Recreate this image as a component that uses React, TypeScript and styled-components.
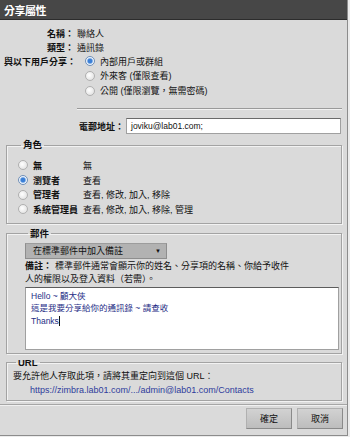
import styled, { createGlobalStyle } from 'styled-components';

const Global = createGlobalStyle`
  html, body {
    margin: 0;
    padding: 0;
    background: #ececec;
  }
  body {
    font-family: "Liberation Sans", "Noto Sans CJK TC", sans-serif;
    font-size: 9px;
    color: #111;
  }
`;

const Dialog = styled.div`
  display: flex;
  flex-direction: column;
  box-sizing: border-box;
  width: 348px;
  height: 436px;
  background: #dadada;
  border-right: 1px solid #8c8c8c;
  border-bottom: 1px solid #8c8c8c;
`;

const TitleBar = styled.div`
  display: flex;
  align-items: center;
  box-sizing: border-box;
  height: 20px;
  padding-left: 4px;
  background: #474747;
  border-bottom: 1px solid #2c2c2c;
  color: #fff;
  font-size: 11px;
  font-weight: 700;
  letter-spacing: -0.5px;
`;

const Body = styled.div`
  display: flex;
  flex-direction: column;
  flex: 1;
  padding: 6px 5px 0 4px;
`;

const InfoRow = styled.div<{ $h?: number }>`
  display: grid;
  grid-template-columns: 70px 1fr;
  column-gap: 3px;
  align-items: center;
  height: ${(p) => p.$h ?? 14}px;
`;

const Label = styled.span`
  text-align: right;
  font-weight: 700;
  white-space: nowrap;
`;

const Value = styled.span`
  white-space: nowrap;
`;

const Option = styled.label`
  display: flex;
  align-items: center;
  gap: 5px;
  padding-left: 8px;
  white-space: nowrap;
`;

const Radio = styled.span<{ $on?: boolean }>`
  box-sizing: border-box;
  width: 10px;
  height: 10px;
  border-radius: 50%;
  border: 1px solid ${(p) => (p.$on ? '#6f8fb8' : '#b0b0b0')};
  background: ${(p) =>
    p.$on
      ? 'radial-gradient(circle at 50% 50%, #3b7fd6 0 2px, #8fb8ea 2.6px, #eef4fb 3.4px)'
      : 'radial-gradient(circle at 40% 40%, #ffffff 0, #e2e2e2 80%)'};
  flex-shrink: 0;
`;

const Divider = styled.div`
  height: 0;
  margin: 10px 0 0 73px;
  border-top: 1px solid #9a9a9a;
  border-bottom: 1px solid #f2f2f2;
`;

const EmailRow = styled.div`
  display: flex;
  align-items: center;
  justify-content: flex-end;
  gap: 2px;
  margin: 8px 1px 0 0;
  height: 16px;
`;

const TextInput = styled.div`
  display: flex;
  align-items: center;
  box-sizing: border-box;
  width: 215px;
  height: 16px;
  padding-left: 4px;
  background: #fff;
  border: 1px solid #a0a0a0;
  border-top-color: #6a6a6a;
  font-size: 8.5px;
`;

const Group = styled.fieldset<{ $top: number; $pad?: string }>`
  margin: ${(p) => p.$top}px 0 0 2px;
  width: 336px;
  box-sizing: border-box;
  padding: ${(p) => p.$pad ?? '0'};
  border: 1px solid #a3a3a3;
  box-shadow: inset 1px 1px 0 #f2f2f2, 1px 1px 0 #f2f2f2;
`;

const Legend = styled.legend`
  margin-left: 3px;
  padding: 0 2px;
  font-weight: 700;
  font-size: 9.5px;
  line-height: 12px;
`;

const RoleRow = styled.div`
  display: grid;
  grid-template-columns: 65px 1fr;
  align-items: center;
  height: 14.7px;
`;

const RoleName = styled.label`
  display: flex;
  align-items: center;
  gap: 5px;
  font-weight: 700;
  white-space: nowrap;
`;

const SelectBox = styled.div`
  display: flex;
  align-items: center;
  justify-content: space-between;
  box-sizing: border-box;
  width: 142px;
  height: 16px;
  margin-top: 1px;
  padding: 0 5px 0 7px;
  background: #b2b2b2;
  border: 1px solid #8e8e8e;
  border-top-color: #9c9c9c;
  font-size: 9px;
`;

const Caret = styled.span`
  font-size: 6px;
`;

const Note = styled.p`
  margin: 1px 0 0;
  line-height: 13px;
  white-space: nowrap;
`;

const NoteLabel = styled.b`
  margin-right: 3px;
  font-weight: 700;
`;

const TextArea = styled.div`
  box-sizing: border-box;
  width: 314px;
  height: 63px;
  margin-top: 1px;
  padding: 2px 5px;
  background: #fff;
  border: 1px solid #a0a0a0;
  border-top-color: #5c5c5c;
  color: #1e2d86;
  line-height: 12.5px;
  font-size: 8.5px;
`;

const Cursor = styled.span`
  border-right: 1px solid #111;
`;

const UrlText = styled.div`
  line-height: 14px;
  white-space: nowrap;
`;

const Link = styled.div`
  padding-left: 17px;
  color: #2f3c9c;
  line-height: 15px;
  white-space: nowrap;
`;

const Footer = styled.div`
  display: flex;
  justify-content: flex-end;
  gap: 5px;
  padding: 3px 4px 0 0;
  height: 31px;
  box-sizing: border-box;
  border-top: 1px solid #a6a6a6;
  box-shadow: inset 0 1px 0 #f0f0f0;
`;

const Button = styled.button`
  box-sizing: border-box;
  width: 46px;
  height: 21px;
  padding: 0;
  font-family: inherit;
  font-size: 9px;
  color: #111;
  background: linear-gradient(#d2d2d2, #bdbdbd);
  border: 1px solid #8a8a8a;
  border-top-color: #b0b0b0;
  border-left-color: #b0b0b0;
`;

const ROLES = [
  { name: '無', desc: '無', on: false },
  { name: '瀏覽者', desc: '查看', on: true },
  { name: '管理者', desc: '查看, 修改, 加入, 移除', on: false },
  { name: '系統管理員', desc: '查看, 修改, 加入, 移除, 管理', on: false },
];

export default function App() {
  return (
    <>
      <Global />
      <Dialog>
        <TitleBar>分享屬性</TitleBar>
        <Body>
          <InfoRow>
            <Label>名稱：</Label>
            <Value>聯絡人</Value>
          </InfoRow>
          <InfoRow>
            <Label>類型：</Label>
            <Value>通訊錄</Value>
          </InfoRow>
          <InfoRow $h={14}>
            <Label>與以下用戶分享：</Label>
            <Option>
              <Radio $on />
              內部用戶或群組
            </Option>
          </InfoRow>
          <InfoRow $h={15}>
            <span />
            <Option>
              <Radio />
              外來客 (僅限查看)
            </Option>
          </InfoRow>
          <InfoRow $h={15}>
            <span />
            <Option>
              <Radio />
              公開 (僅限瀏覽，無需密碼)
            </Option>
          </InfoRow>
          <Divider />
          <EmailRow>
            <Label>電郵地址：</Label>
            <TextInput>joviku@lab01.com;</TextInput>
          </EmailRow>

          <Group $top={5} $pad="7px 0 6px 11px">
            <Legend>角色</Legend>
            {ROLES.map((r) => (
              <RoleRow key={r.name}>
                <RoleName>
                  <Radio $on={r.on} />
                  {r.name}
                </RoleName>
                <Value>{r.desc}</Value>
              </RoleRow>
            ))}
          </Group>

          <Group $top={4} $pad="2px 0 3px 18px">
            <Legend>郵件</Legend>
            <SelectBox>
              在標準郵件中加入備註
              <Caret>▼</Caret>
            </SelectBox>
            <Note>
              <NoteLabel>備註：</NoteLabel>
              <span>標準郵件通常會顯示你的姓名、分享項的名稱、你給予收件</span>
              <br />
              <span>人的權限以及登入資料（若需）。</span>
            </Note>
            <TextArea>
              Hello ~ 顧大俠
              <br />
              這是我要分享給你的通訊錄 ~ 請查收
              <br />
              <Cursor>Thanks</Cursor>
            </TextArea>
          </Group>

          <Group $top={3} $pad="0 0 2px 6px">
            <Legend>URL</Legend>
            <UrlText>要允許他人存取此項，請將其重定向到這個 URL：</UrlText>
            <Link>https://zimbra.lab01.com/.../admin@lab01.com/Contacts</Link>
          </Group>
        </Body>
        <Footer>
          <Button>確定</Button>
          <Button>取消</Button>
        </Footer>
      </Dialog>
    </>
  );
}
